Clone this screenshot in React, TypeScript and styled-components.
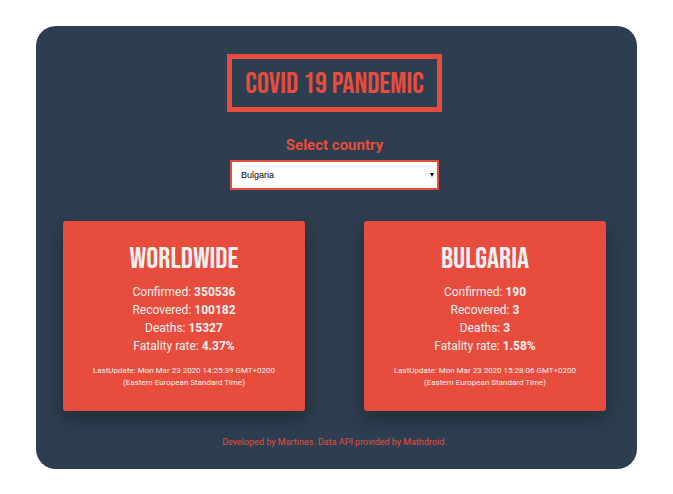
import React, { useState } from "react";
import styled, { createGlobalStyle } from "styled-components";

const red = "#e74c3c";
const navy = "#2d3e50";
const light = "#f1f1f1";
const display = '"Bebas Neue", "Liberation Sans Narrow", "Roboto Condensed", "Liberation Sans", sans-serif';

const GlobalStyle = createGlobalStyle`
  *, *::before, *::after { box-sizing: border-box; }
  body { margin: 0; background: #fff; font-family: Roboto, sans-serif; }
`;

const Page = styled.div`
  padding: 26px 36px 25px;
`;

const Panel = styled.main`
  display: flex;
  flex-direction: column;
  align-items: center;
  padding: 28px 31px 20px 27px;
  border-radius: 20px;
  background: ${navy};
  color: ${red};
`;

const Title = styled.h1`
  margin: 0;
  padding: 5px 13px 3px;
  border: 5px solid ${red};
  font: 400 30px/40px ${display};
  text-transform: uppercase;
  white-space: nowrap;
`;

const Picker = styled.div`
  display: flex;
  flex-direction: column;
  align-items: center;
  margin-top: 23px;
`;

const PickerLabel = styled.label`
  font-size: 15px;
  font-weight: 700;
  line-height: 20px;
`;

const SelectWrap = styled.div`
  position: relative;
  margin-top: 5px;
`;

const Select = styled.select`
  display: block;
  width: 209px;
  height: 30px;
  padding: 0 20px 0 9px;
  appearance: none;
  border: 2px solid ${red};
  border-radius: 0;
  background: #fff;
  color: #000;
  font: 9px "Liberation Sans", sans-serif;
`;

const Arrow = styled.svg`
  position: absolute;
  top: 13px;
  right: 5px;
  width: 4px;
  height: 4px;
  pointer-events: none;
`;

const Cards = styled.section`
  display: grid;
  grid-template-columns: 1fr 1fr;
  gap: 59px;
  align-self: stretch;
  margin-top: 31px;
`;

const Card = styled.article`
  padding: 18px 16px 22px;
  border-radius: 3px;
  background: ${red};
  color: ${light};
  text-align: center;
  box-shadow: 0 8px 20px rgba(0, 0, 0, 0.3);
`;

const CardTitle = styled.h2`
  margin: 0;
  font: 400 30px/40px ${display};
  text-transform: uppercase;
`;

const Stats = styled.div`
  margin-top: 4px;
`;

const Stat = styled.p`
  margin: 0;
  font-size: 12px;
  line-height: 18px;
`;

const Updated = styled.p`
  margin: 10px 0 0;
  font-size: 8px;
  line-height: 12px;
`;

const Footer = styled.footer`
  margin-top: 25px;
  font-size: 9px;
  line-height: 13px;
`;

const regions = [
  {
    name: "Worldwide",
    stats: [["Confirmed", "350536"], ["Recovered", "100182"], ["Deaths", "15327"], ["Fatality rate", "4.37%"]],
    updated: "Mon Mar 23 2020 14:25:39 GMT+0200",
  },
  {
    name: "Bulgaria",
    stats: [["Confirmed", "190"], ["Recovered", "3"], ["Deaths", "3"], ["Fatality rate", "1.58%"]],
    updated: "Mon Mar 23 2020 15:28:06 GMT+0200",
  },
];

export default function App() {
  const [country, setCountry] = useState("Bulgaria");
  return (
    <>
      <GlobalStyle />
      <Page>
        <Panel>
          <Title>Covid 19 Pandemic</Title>
          <Picker>
            <PickerLabel htmlFor="country">Select country</PickerLabel>
            <SelectWrap>
              <Select id="country" value={country} onChange={(e) => setCountry(e.target.value)}>
                <option>Bulgaria</option>
              </Select>
              <Arrow viewBox="0 0 4 4" aria-hidden="true">
                <path d="M0 0h4L2 4z" fill="#000" />
              </Arrow>
            </SelectWrap>
          </Picker>
          <Cards>
            {regions.map((region) => (
              <Card key={region.name}>
                <CardTitle>{region.name}</CardTitle>
                <Stats>
                  {region.stats.map(([label, value]) => (
                    <Stat key={label}>
                      {label}: <strong>{value}</strong>
                    </Stat>
                  ))}
                </Stats>
                <Updated>
                  LastUpdate: {region.updated}
                  <br />
                  (Eastern European Standard Time)
                </Updated>
              </Card>
            ))}
          </Cards>
          <Footer>Developed by Martines. Data API provided by Mathdroid.</Footer>
        </Panel>
      </Page>
    </>
  );
}
